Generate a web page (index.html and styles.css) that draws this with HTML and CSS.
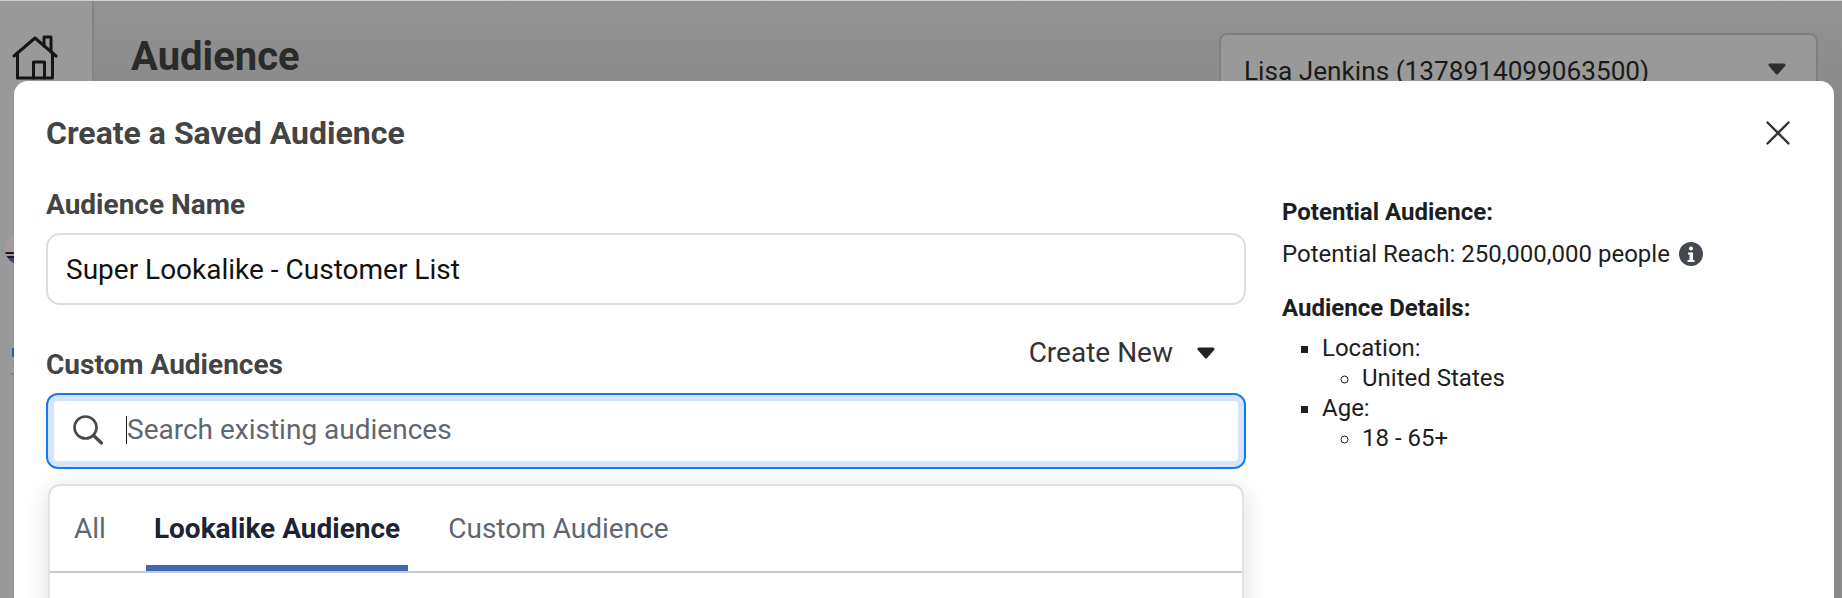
FILE: index.html
```html
<!DOCTYPE html>
<html lang="en">
<head>
<meta charset="utf-8">
<title>Create a Saved Audience</title>
<link rel="stylesheet" href="styles.css">
</head>
<body>
<div class="page">
  <nav class="rail">
    <svg class="home" viewBox="0 0 44 44" fill="none" stroke="#151515" stroke-width="3" stroke-linejoin="round" stroke-linecap="round">
      <path d="M1 20 L22 2 L43 20"/>
      <path d="M31 10 V1 H38 V16"/>
      <path d="M4.500 17 V42 H39.500 V17"/>
      <path d="M20.500 42 V26 H31.500 V42"/>
    </svg>
    <span class="avatar"></span>
    <span class="rail-mark"></span>
    <span class="rail-rule"></span>
  </nav>
  <header class="topbar">
    <h1 class="page-title">Audience</h1>
    <div class="account">
      <span>Lisa Jenkins (1378914099063500)</span>
      <svg class="caret" viewBox="0 0 18 12"><path d="M2 2 H16 L9 10 Z"/></svg>
    </div>
  </header>
</div>
<section class="modal">
  <div class="modal-head">
    <h2 class="modal-title">Create a Saved Audience</h2>
    <svg class="close" viewBox="0 0 24 24" fill="none" stroke="#333" stroke-width="2.400" stroke-linecap="round"><path d="M1.500 1.500 L22.500 22.500 M22.500 1.500 L1.500 22.500"/></svg>
  </div>
  <div class="modal-body">
    <div class="form">
      <label class="field-label name-label">Audience Name</label>
      <div class="text-input">Super Lookalike - Customer List</div>
      <div class="section-row">
        <span class="field-label">Custom Audiences</span>
        <span class="create-new">Create New
          <svg class="caret" viewBox="0 0 18 12"><path d="M2 2 H16 L9 10 Z"/></svg>
        </span>
      </div>
      <div class="search">
        <svg class="search-icon" viewBox="0 0 30 30" fill="none" stroke="#45494f" stroke-width="2.600" stroke-linecap="round"><circle cx="12.500" cy="12.500" r="11"/><path d="M20.500 20.500 L28.500 28" stroke-width="3.200"/></svg>
        <span class="cursor"></span>
        <span class="placeholder">Search existing audiences</span>
      </div>
      <div class="dropdown">
        <div class="tabs">
          <span class="tab">All</span>
          <span class="tab active">Lookalike Audience</span>
          <span class="tab">Custom Audience</span>
        </div>
      </div>
    </div>
    <aside class="summary">
      <h3 class="summary-head first">Potential Audience:</h3>
      <p class="reach">Potential Reach: 250,000,000 people
        <svg class="info" viewBox="0 0 24 24"><circle cx="12" cy="12" r="12" fill="#444950"/><circle cx="12" cy="6.500" r="2" fill="#fff"/><path d="M9 10.500 H14 V18 H15.500 V20 H8.500 V18 H10.500 V12.500 H9 Z" fill="#fff"/></svg>
      </p>
      <h3 class="summary-head">Audience Details:</h3>
      <ul class="details">
        <li>Location:
          <ul><li>United States</li></ul>
        </li>
        <li>Age:
          <ul><li>18 - 65+</li></ul>
        </li>
      </ul>
    </aside>
  </div>
</section>
</body>
</html>
```
FILE: styles.css
```css
* { box-sizing: border-box; }
html, body { margin: 0; height: 100%; overflow: hidden; }
body {
  width: 1842px;
  height: 598px;
  position: relative;
  font-family: Roboto, "Liberation Sans", sans-serif;
  background: #939393;
  color: #1c1e21;
}
.page {
  display: flex;
  height: 598px;
  border-top: 1px solid #cfcfcf;
}
.rail {
  width: 94px;
  flex: none;
  background: #999;
  border-right: 2px solid #858585;
  padding: 35px 0 0 13px;
  display: flex;
  flex-direction: column;
}
.home { width: 44px; height: 44px; flex: none; overflow: visible; }
.avatar {
  width: 32px; height: 32px; border-radius: 50%;
  margin: 153px 0 0 -8px; flex: none;
  background: linear-gradient(#a89a9a 0 59%, #1c1c1c 59% 66%, #999 66% 72%, #1c1c1c 72% 78%, #43408a 78%);
}
.rail-mark {
  width: 3px; height: 9px; margin: 83px 0 0 -1px; flex: none;
  background: #2c5cab;
}
.rail-rule {
  width: 4px; height: 2px; margin: 16px 0 0 -2px; flex: none;
  background: #808080;
}
.topbar {
  flex: 1;
  display: flex;
  justify-content: space-between;
  align-items: flex-start;
  padding: 32px 24px 0 37px;
  background: linear-gradient(#939393, #8a8a8a 90px);
}
.page-title {
  margin: 0;
  font-size: 40px;
  line-height: 48px;
  font-weight: 700;
  color: #2a2a2a;
}
.account {
  width: 599px;
  height: 90px;
  background: #999;
  border: 2px solid #7c7f85;
  border-radius: 8px;
  padding: 18px 30px 0 23px;
  display: flex;
  justify-content: space-between;
  font-size: 26.200px;
  line-height: 36px;
  color: #1a1a1a;
}
.account .caret { margin-top: 10px; fill: #2b2f33; stroke: #2b2f33; }
.caret { width: 18px; height: 12px; fill: #222; stroke: #222; stroke-width: 3; stroke-linejoin: round; flex: none; }
.modal {
  position: absolute;
  left: 14px; top: 81px; right: 8px; bottom: 0;
  background: #fff;
  border-radius: 14px 14px 0 0;
  overflow: hidden;
}
.modal-head {
  height: 104px;
  padding: 30px 44px 0 32px;
  display: flex;
  justify-content: space-between;
  align-items: flex-start;
}
.modal-title {
  margin: 0;
  font-size: 32px;
  line-height: 44px;
  font-weight: 700;
  color: #444;
}
.close { width: 24px; height: 24px; margin-top: 10px; }
.modal-body {
  display: grid;
  grid-template-columns: 1200px 1fr;
  column-gap: 36px;
  padding-left: 32px;
}
.field-label {
  display: block;
  font-size: 28px;
  line-height: 38px;
  font-weight: 700;
  color: #444;
}
.name-label { line-height: 40px; margin-bottom: 8px; }
.text-input {
  height: 72px;
  border: 2px solid #ddd;
  border-radius: 14px;
  padding: 0 18px;
  font-size: 28px;
  line-height: 70px;
  color: #111;
}
.section-row {
  height: 88px;
  display: flex;
  justify-content: space-between;
  padding-top: 41px;
  padding-right: 31px;
  align-items: flex-start;
}
.create-new {
  display: flex;
  align-items: center;
  gap: 24px;
  font-size: 28px;
  line-height: 34px;
  margin-top: -10px;
  color: #333;
}
.search {
  height: 76px;
  border: 2px solid #1877f2;
  border-radius: 12px;
  box-shadow: inset 0 0 0 6px #d8e4fb;
  display: flex;
  align-items: center;
  padding: 0 0 3px 25px;
  background: #fff;
}
.search-icon { width: 30px; height: 30px; flex: none; }
.cursor { width: 1px; height: 28px; background: #111; margin-left: 23px; flex: none; }
.placeholder { font-size: 28px; color: #606770; }
.dropdown {
  margin: 15px 2px 0;
  height: 200px;
  border: 2px solid #e2e2e2;
  border-radius: 12px 12px 0 0;
  box-shadow: 0 6px 24px rgba(0, 0, 0, .14);
  background: #fff;
}
.tabs {
  height: 87px;
  border-bottom: 2px solid #c8c9cc;
  display: flex;
  padding-left: 16px;
  gap: 32px;
}
.tab {
  padding: 0 8px;
  font-size: 28px;
  line-height: 86px;
  color: #606770;
  height: 85px;
}
.tab.active {
  font-weight: 700;
  color: #1c2433;
  border-bottom: 6px solid #4267b2;
}
.summary { padding-top: 12px; font-size: 24px; line-height: 30px; }
.summary-head { margin: 0; font-size: 24px; line-height: 30px; font-weight: 700; color: #1c1e21; }
.reach { margin: 12px 0 24px; display: flex; align-items: center; gap: 9px; white-space: nowrap; }
.info { width: 24px; height: 24px; flex: none; }
.details { margin: 10px 0 0; padding-left: 40px; list-style: square; }
.details ul { margin: 0; padding-left: 40px; list-style: circle; }
```
